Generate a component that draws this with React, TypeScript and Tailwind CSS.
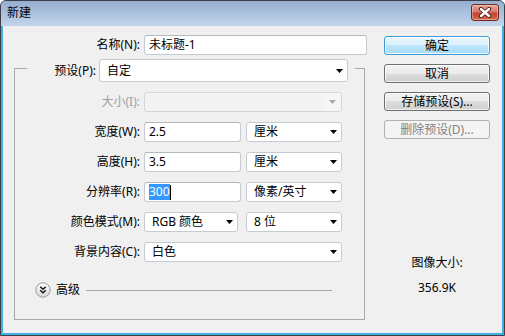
import React from "react";

function Arrow({ disabled }: { disabled?: boolean }) {
  return (
    <svg width="7" height="4" viewBox="0 0 7 4" className="shrink-0">
      <path d="M0 0H7L3.5 4Z" fill={disabled ? "#a8a8a8" : "#000"} />
    </svg>
  );
}

function Select({ className, children }: { className: string; children: React.ReactNode }) {
  return (
    <div
      className={
        "flex items-center justify-between bg-white border border-[#c6cad1] rounded-[3px] pl-[7px] pr-[4px] " +
        className
      }
    >
      <span className="whitespace-nowrap">{children}</span>
      <Arrow />
    </div>
  );
}

function Input({ className, children }: { className: string; children?: React.ReactNode }) {
  return (
    <div
      className={
        "flex items-center bg-white border border-[#c6cad1] border-t-[#b3b7be] rounded-[3px] pl-[4px] " + className
      }
    >
      <span className="whitespace-nowrap flex items-center">{children}</span>
    </div>
  );
}

function Row({ label, disabled, children }: { label: string; disabled?: boolean; children: React.ReactNode }) {
  return (
    <div className="flex items-center h-[20px]">
      <span className={"w-[113px] text-right whitespace-nowrap " + (disabled ? "text-[#a0a0a0]" : "text-black")}>
        {label}
      </span>
      <div className="ml-[4px] flex items-center h-full">{children}</div>
    </div>
  );
}

function Button({
  children,
  variant,
}: {
  children: React.ReactNode;
  variant: "default" | "normal" | "disabled";
}) {
  const cls =
    variant === "default"
      ? "border-[#3a9bd8] bg-[linear-gradient(to_bottom,#eaf6fd_0%,#d9f0fc_50%,#bee6fd_50%,#a7d9f5_100%)] shadow-[inset_0_0_0_1px_rgba(255,255,255,0.8)] text-black"
      : variant === "normal"
      ? "border-[#707070] bg-[linear-gradient(to_bottom,#f2f2f2_0%,#ebebeb_50%,#dddddd_50%,#cfcfcf_100%)] shadow-[inset_0_0_0_1px_rgba(255,255,255,0.7)] text-black"
      : "border-[#adb2b5] bg-[#f4f4f4] text-[#838383]";
  return (
    <div className={"h-[19px] w-full flex items-center justify-center border rounded-[3px] whitespace-nowrap " + cls}>
      {children}
    </div>
  );
}

function CloseButton() {
  return (
    <div className="w-[28px] h-[17px] rounded-[3px] border border-[#6e2a22] bg-[linear-gradient(to_bottom,#e8a394_0%,#d37a6a_45%,#c2432f_55%,#d36a4f_100%)] shadow-[inset_0_0_0_1px_rgba(255,255,255,0.35)] flex items-center justify-center">
      <svg width="14" height="11" viewBox="0 0 14 11">
        <path d="M3 2L11 9M11 2L3 9" stroke="#4b1d16" strokeWidth="4.2" strokeLinecap="round" />
        <path d="M3 2L11 9M11 2L3 9" stroke="#fff" strokeWidth="2.4" strokeLinecap="round" />
      </svg>
    </div>
  );
}

function AdvancedIcon() {
  return (
    <svg width="16" height="16" viewBox="0 0 16 16" className="shrink-0">
      <defs>
        <linearGradient id="adv" x1="0" y1="0" x2="0" y2="1">
          <stop offset="0" stopColor="#ffffff" />
          <stop offset="1" stopColor="#d6d6d6" />
        </linearGradient>
      </defs>
      <circle cx="8" cy="8" r="7.2" fill="url(#adv)" stroke="#9a9a9a" strokeWidth="1" />
      <path d="M5.2 4.8L8 7.3L10.8 4.8M5.2 8.3L8 10.8L10.8 8.3" fill="none" stroke="#1a1a1a" strokeWidth="1.5" />
    </svg>
  );
}

export default function App() {
  return (
    <div className="w-[505px] h-[336px] font-[family-name:'Noto_Sans','Noto_Sans_CJK_SC',sans-serif] text-[12px] leading-[16px] text-black">
      <div className="w-full h-full flex flex-col border border-[#3b4048] rounded-t-[6px] overflow-hidden bg-[#44ade2]">
        <div className="h-[25px] shrink-0 flex items-start justify-between pl-[6px] pr-[5px] bg-[linear-gradient(to_bottom,#96aecf,#c2d5ec)]">
          <span className="mt-[5px] text-[12px] leading-[14px]">新建</span>
          <div className="mt-[3px]">
            <CloseButton />
          </div>
        </div>
        <div className="flex-1 mx-[2px] mb-[2px] bg-[#f0f0f0] flex pl-[11px]">
          <div className="flex flex-col w-[353px] pt-[9px]">
            <div className="flex items-center h-[20px]">
              <span className="w-[126px] text-right whitespace-nowrap">名称(N):</span>
              <Input className="ml-[4px] w-[223px] h-[20px]">未标题-1</Input>
            </div>
            <fieldset className="mt-[-1px] w-[351px] border border-[#a8a8a8] pl-[12px] pt-[10px] pb-[21px]">
              <legend className="pt-[5px] pr-[7px]">
                <div className="flex items-center">
                  <span className="w-[69px] text-right whitespace-nowrap">预设(P):</span>
                  <Select className="ml-[3px] w-[249px] h-[23px]">自定</Select>
                </div>
              </legend>
              <div className="flex flex-col gap-[10px]">
                <Row label="大小(I):" disabled>
                  <div className="w-[198px] h-[20px] flex border border-[#d4d6da] rounded-[3px] bg-[#f3f3f3] overflow-hidden">
                    <div className="flex-1" />
                    <div className="w-[18px] flex items-center justify-center bg-[#f6f6f6]">
                      <Arrow disabled />
                    </div>
                  </div>
                </Row>
                <Row label="宽度(W):">
                  <Input className="w-[97px] h-[20px]">2.5</Input>
                  <Select className="ml-[5px] w-[96px] h-[20px]">厘米</Select>
                </Row>
                <Row label="高度(H):">
                  <Input className="w-[97px] h-[20px]">3.5</Input>
                  <Select className="ml-[5px] w-[96px] h-[20px]">厘米</Select>
                </Row>
                <Row label="分辨率(R):">
                  <Input className="w-[97px] h-[20px]">
                    <span className="inline-block bg-[#3399ff] text-white leading-[16px]">300</span>
                    <span className="inline-block w-px h-[15px] bg-black" />
                  </Input>
                  <Select className="ml-[5px] w-[96px] h-[20px]">像素/英寸</Select>
                </Row>
                <Row label="颜色模式(M):">
                  <Select className="w-[94px] h-[20px]">RGB 颜色</Select>
                  <Select className="ml-[8px] w-[96px] h-[20px]">8 位</Select>
                </Row>
                <Row label="背景内容(C):">
                  <Select className="w-[198px] h-[20px]">白色</Select>
                </Row>
              </div>
              <div className="mt-[20px] h-[16px] flex items-center">
                <div className="ml-[8px]">
                  <AdvancedIcon />
                </div>
                <span className="ml-[5px] whitespace-nowrap">高级</span>
                <div className="ml-[6px] w-[246px] h-px bg-[#a8a8a8]" />
              </div>
            </fieldset>
          </div>
          <div className="ml-[17px] w-[106px] pt-[10px] flex flex-col items-center">
            <div className="w-full flex flex-col gap-[9px]">
              <Button variant="default">确定</Button>
              <Button variant="normal">取消</Button>
              <Button variant="normal">存储预设(S)...</Button>
              <Button variant="disabled">删除预设(D)...</Button>
            </div>
            <span className="mt-[116px] whitespace-nowrap">图像大小:</span>
            <span className="mt-[9px] whitespace-nowrap">356.9K</span>
          </div>
        </div>
      </div>
    </div>
  );
}
